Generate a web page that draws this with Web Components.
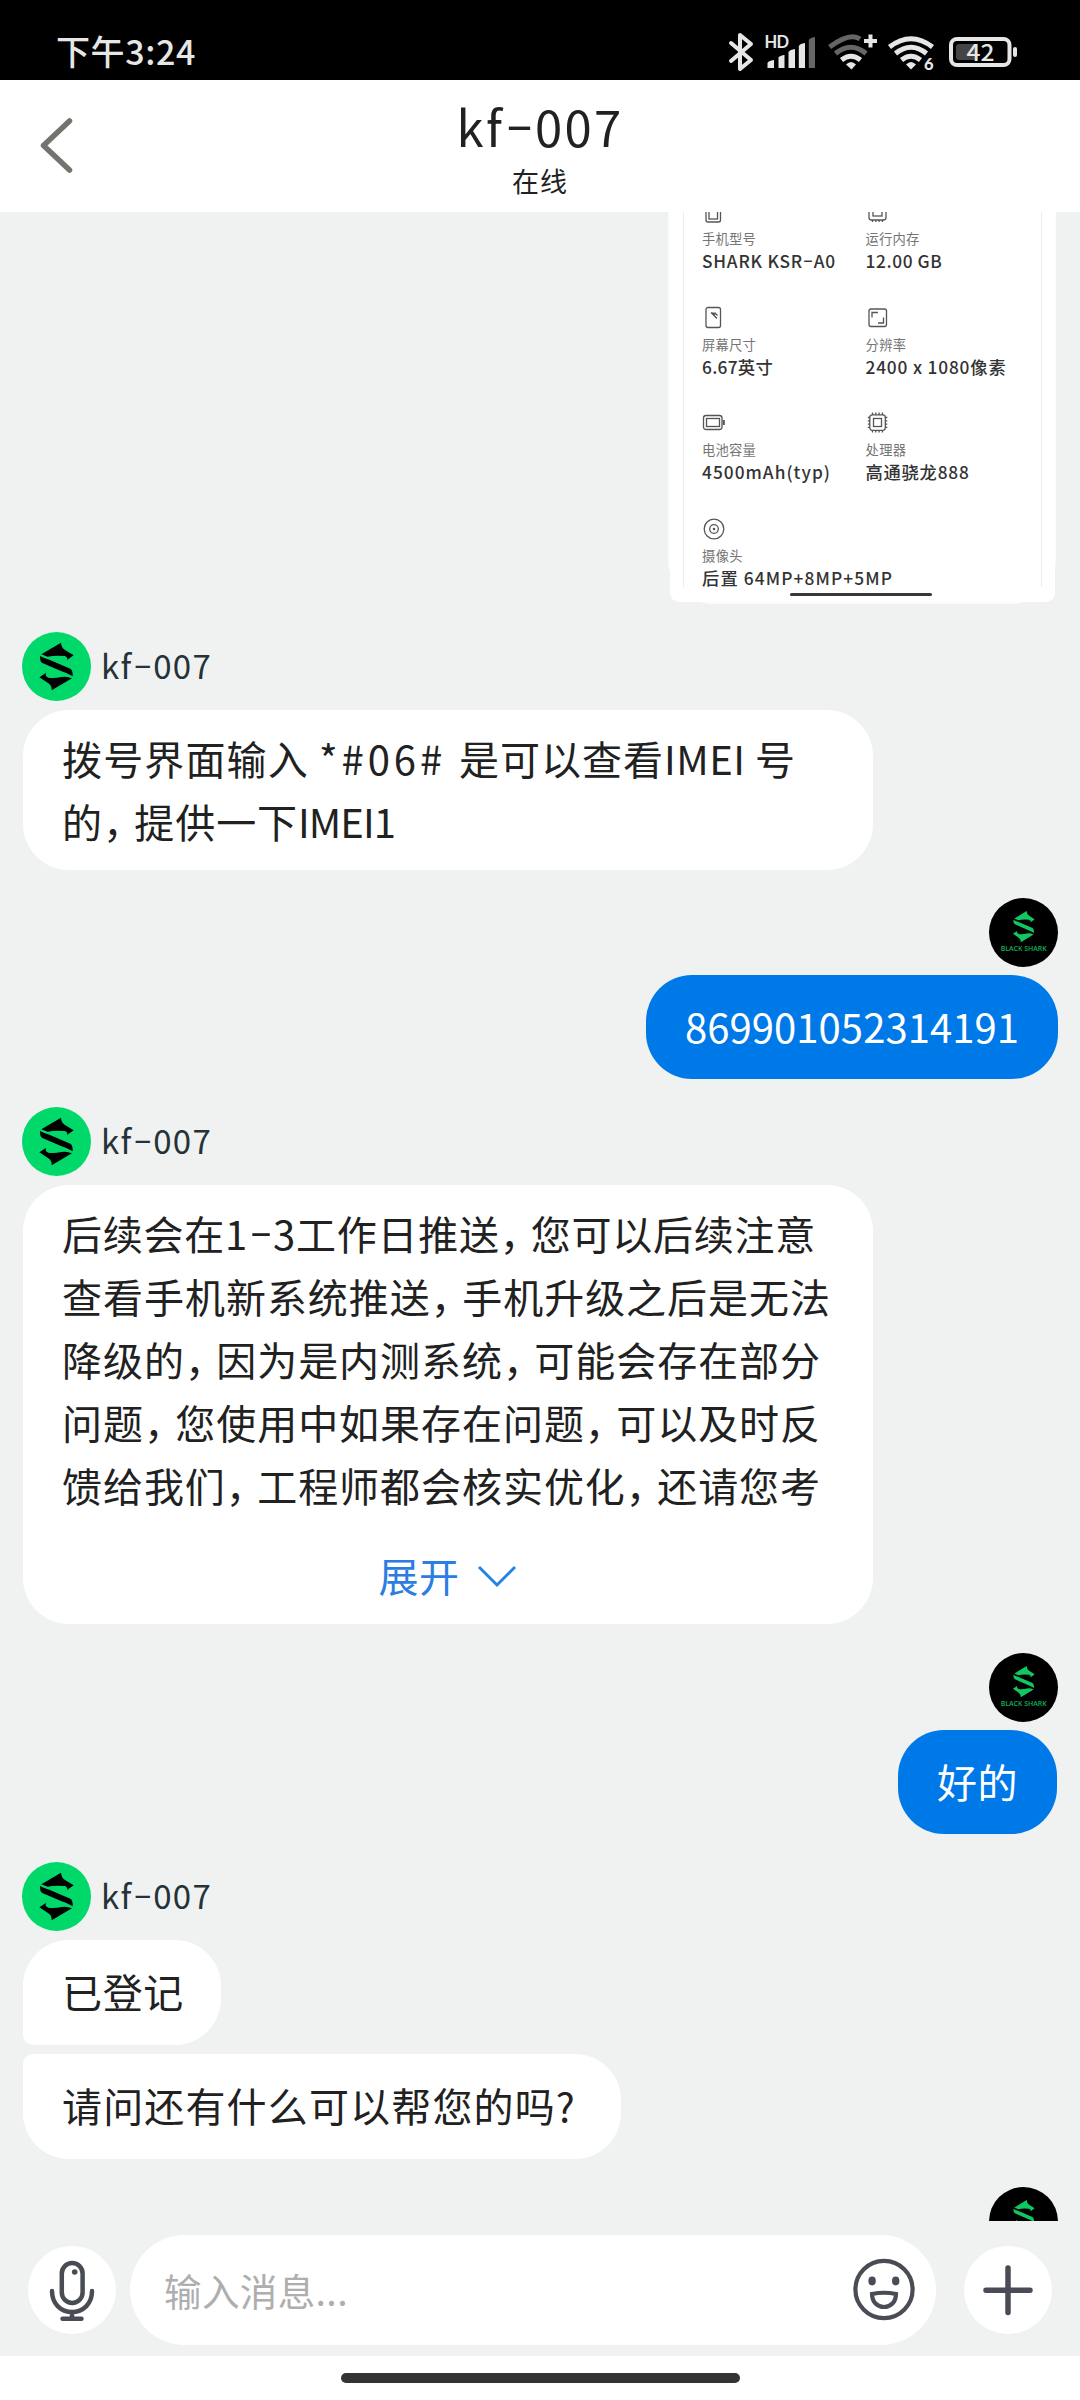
<!DOCTYPE html>
<html lang="zh-CN">
<head>
<meta charset="utf-8">
<title>kf-007</title>
<style>
html,body{margin:0;padding:0}
body{width:1080px;height:2400px;overflow:hidden;background:#fff;color:#212121;font-family:"Noto Sans CJK SC",sans-serif}
.line{display:flex}
</style>
</head>
<body>
<phone-screen>
  <status-bar></status-bar>
  <chat-header><fit-text slot="name" w="167">kf-007</fit-text><fit-text slot="state" w="56">在线</fit-text></chat-header>
  <chat-log>
    <spec-card>
      <spec-cell icon="phone"><fit-text slot="label" w="54">手机型号</fit-text><fit-text w="134">SHARK KSR-A0</fit-text></spec-cell>
      <spec-cell icon="memory"><fit-text slot="label" w="54">运行内存</fit-text><fit-text w="77">12.00 GB</fit-text></spec-cell>
      <spec-cell icon="screen"><fit-text slot="label" w="54">屏幕尺寸</fit-text><fit-text w="71">6.67英寸</fit-text></spec-cell>
      <spec-cell icon="resolution"><fit-text slot="label" w="41">分辨率</fit-text><fit-text w="141">2400 x 1080像素</fit-text></spec-cell>
      <spec-cell icon="battery"><fit-text slot="label" w="54">电池容量</fit-text><fit-text w="129">4500mAh(typ)</fit-text></spec-cell>
      <spec-cell icon="chip"><fit-text slot="label" w="41">处理器</fit-text><fit-text w="104">高通骁龙888</fit-text></spec-cell>
      <spec-cell icon="camera"><fit-text slot="label" w="41">摄像头</fit-text><fit-text w="191">后置 64MP+8MP+5MP</fit-text></spec-cell>
    </spec-card>

    <agent-name style="margin-top:19px"><fit-text w="111">kf-007</fit-text></agent-name>
    <chat-bubble style="width:850px;height:160px">
      <div class="line"><fit-text w="257">拨号界面输入 </fit-text><fit-text w="140">*#06# </fit-text><fit-text w="205">是可以查看</fit-text><fit-text w="91">IMEI </fit-text><fit-text w="41">号</fit-text></div>
      <div class="line"><fit-text w="236">的，提供一下</fit-text><fit-text w="97">IMEI1</fit-text></div>
    </chat-bubble>

    <shark-avatar mine style="margin-top:19px"></shark-avatar>
    <chat-bubble mine short style="width:412px;height:104px"><fit-text w="334">869901052314191</fit-text></chat-bubble>

    <agent-name style="margin-top:19px"><fit-text w="111">kf-007</fit-text></agent-name>
    <chat-bubble style="width:850px;height:439px">
      <fit-text w="754">后续会在1-3工作日推送，您可以后续注意</fit-text>
      <fit-text w="769">查看手机新系统推送，手机升级之后是无法</fit-text>
      <fit-text w="759">降级的，因为是内测系统，可能会存在部分</fit-text>
      <fit-text w="759">问题，您使用中如果存在问题，可以及时反</fit-text>
      <fit-text w="759">馈给我们，工程师都会核实优化，还请您考</fit-text>
      <expand-link slot="more"><fit-text w="81">展开</fit-text></expand-link>
    </chat-bubble>

    <shark-avatar mine style="margin-top:20px"></shark-avatar>
    <chat-bubble mine short style="width:159px;height:104px;margin-right:1px"><fit-text w="81">好的</fit-text></chat-bubble>

    <agent-name style="margin-top:19px"><fit-text w="111">kf-007</fit-text></agent-name>
    <chat-bubble short style="width:198px;height:105px;--bl:10px"><fit-text w="122">已登记</fit-text></chat-bubble>
    <chat-bubble short style="width:598px;height:105px;--tl:10px"><fit-text w="514">请问还有什么可以帮您的吗?</fit-text></chat-bubble>

    <shark-avatar mine plain style="margin-top:19px"></shark-avatar>
  </chat-log>
  <message-composer><fit-text w="184">输入消息...</fit-text></message-composer>
  <home-indicator></home-indicator>
</phone-screen>

<script>
class Base extends HTMLElement {
  constructor() {
    super();
    this.attachShadow({ mode: 'open' });
  }
  paint(css, html) {
    this.shadowRoot.innerHTML = '<style>:host,*{box-sizing:border-box}svg{display:block;flex:none}' + css + '</style>' + html;
  }
}

const sharkMark = `
  <path d="M183 98 Q184 113 195 120 L221 136 L201 150 Q205 143 194 138 Q165 135 143 140 L124 133 Z"/>
  <path d="M120 138 Q135 146 150 150 L211 176 Q219 181 218 199 Q200 188 183 183 L127 159 Q119 154 120 138 Z"/>
  <path d="M139 188 Q133 198 145 203 Q163 206 184 201 Q200 198 216 205 L155 241 Q156 227 145 220 L118 202 Z"/>`;

customElements.define('phone-screen', class extends Base {
  connectedCallback() {
    this.paint(':host{display:flex;flex-direction:column;width:1080px;height:2400px;overflow:hidden;background:#eff2f1}::slotted(*){flex:none}', '<slot></slot>');
  }
});

customElements.define('status-bar', class extends Base {
  connectedCallback() {
    this.paint(`:host{display:flex;justify-content:space-between;height:80px;background:#000;color:#e6e6e6;padding-left:56px}
      .time{font-size:34px;font-weight:500;line-height:44px;padding-top:29px}`,
      `<div class="time"><fit-text w="140">下午3:24</fit-text></div>
      <svg width="360" height="80" viewBox="720 0 360 80" fill="none" stroke-linecap="butt">
        <g stroke="#e6e6e6" stroke-width="4" stroke-linejoin="round" stroke-linecap="round"><path d="M731 43 L751 60 L740 69 V35 L751 44 L731 61"/></g>
        <text x="764.5" y="48" font-size="16.5" font-weight="700" textLength="24.5" fill="#e6e6e6" font-family="Lato,sans-serif">HD</text>
        <g fill="#e6e6e6"><path d="M767.5 63 Q768 61 774 60 V68 H767.5Z"/><path d="M778.5 57.500 Q780 55.500 784.500 55 V68 H778.500Z"/><path d="M788.500 52 Q790 49.500 795 49 V68 H788.500Z"/><path d="M798.800 46 Q800 43.500 805 43 V68 H798.800Z"/></g>
        <path d="M808.800 40 Q810 37.500 815 37 V68 H808.800Z" fill="#666"/>
        <g stroke-width="5"><path d="M829.600 47 Q850 32 860 39" stroke="#666"/><path d="M835.500 53.500 Q851 41 866 53.500" stroke="#666"/><path d="M841.500 60 Q851 52.500 860.500 60" stroke="#e6e6e6"/></g>
        <path d="M846 64.500 Q851 59.500 856 64.500 L851.500 69.500Z" fill="#e6e6e6"/>
        <path d="M870.500 34.500V47.500M864 41H877" stroke="#e6e6e6" stroke-width="4"/>
        <g stroke="#e6e6e6" stroke-width="5"><path d="M889.500 47 Q911 30.500 932.500 47"/><path d="M895.500 53.500 Q911 41 926.500 53.500"/><path d="M901.500 60 Q911 52.500 920.500 60"/></g>
        <path d="M906 64.500 Q911 59.500 916 64.500 L911 69.500Z" fill="#e6e6e6"/>
        <text x="924" y="70" font-size="16.500" font-weight="900" fill="#e6e6e6" font-family="Lato,sans-serif">6</text>
        <rect x="951" y="39" width="58.500" height="26" rx="6" stroke="#e6e6e6" stroke-width="4"/>
        <path d="M959 44H976V60H959Q956 60 956 57V47Q956 44 959 44Z" fill="#444"/>
        <text x="966.500" y="60.700" font-size="23" font-weight="500" textLength="28" lengthAdjust="spacingAndGlyphs" fill="#e6e6e6" font-family="Noto Sans CJK SC,sans-serif">42</text>
        <rect x="1013" y="47" width="4" height="10" rx="2" fill="#e6e6e6"/>
      </svg>`);
  }
});

customElements.define('chat-header', class extends Base {
  connectedCallback() {
    this.paint(`:host{display:grid;grid-template-columns:120px 1fr 120px;height:132px;background:#fff}
      svg{margin:35px 0 0 38px}
      .mid{display:flex;flex-direction:column;align-items:center}
      .name{font-size:49px;line-height:60px;margin-top:16px}
      .state{font-size:27px;line-height:36px;margin-top:7px}`,
      `<svg width="40" height="62" fill="none" stroke="#74746e" stroke-width="5.500" stroke-linecap="round" stroke-linejoin="round"><path d="M31.500 6 L5.500 30.500 L31.500 55"/></svg>
      <div class="mid"><div class="name"><slot name="name"></slot></div><div class="state"><slot name="state"></slot></div></div>`);
  }
});

customElements.define('chat-log', class extends Base {
  connectedCallback() {
    this.paint(`:host{display:flex;flex-direction:column;gap:9px;height:2009px;overflow:hidden;padding:0 22px 0 23px}
      ::slotted(*){flex:none}`, '<slot></slot>');
  }
});

customElements.define('spec-card', class extends Base {
  connectedCallback() {
    this.paint(`:host{display:block;align-self:flex-end;width:388px;height:392px;margin-right:2px;padding:0 1px 2px 2px;background:#fbfdfc;border-radius:0 0 45px 45px}
      .shot{display:flex;flex-direction:column;align-items:center;height:390px;background:#fff;border-radius:0 0 9px 9px;overflow:hidden}
      .grid{display:grid;grid-template-columns:163.500px 1fr;grid-auto-rows:105.600px;width:359px;height:375px;flex:none;border:solid #ececec;border-width:0 1px;padding-left:18px;align-self:flex-start;margin-left:13px}
      .grid ::slotted(*){margin-top:-12px}
      .bar{width:142px;height:3.500px;border-radius:2px;background:#383838;margin:5.500px 3px 0 0;flex:none}`,
      `<div class="shot"><div class="grid"><slot></slot></div><div class="bar"></div></div>`);
  }
});

const specIcons = {
  phone: '<rect x="4" y="2" width="14.500" height="20" rx="2"/><rect x="7" y="5" width="8.500" height="14"/>',
  memory: '<rect x="3" y="3" width="17" height="17" rx="2.500"/><rect x="7" y="7" width="9" height="9"/><path d="M6.500 20v2M9.800 20v2M13.100 20v2M16.400 20v2"/>',
  screen: '<rect x="4" y="1.500" width="14.500" height="20" rx="2"/><path d="M9 6.500l6 6M12.500 6.500l3 3M10.500 6.500l2.500 2.500"/>',
  resolution: '<rect x="3" y="3" width="17.500" height="17.500" rx="2"/><path d="M6 11.500V6.500H12M12 17H17.500V11.500"/>',
  battery: '<rect x="1.500" y="4.500" width="18.500" height="14" rx="2.500"/><rect x="4.500" y="7.500" width="13" height="8"/><path d="M21.800 9v5" stroke-width="2"/>',
  chip: '<rect x="3.800" y="3.800" width="15.500" height="15.500" rx="2.500"/><rect x="7.500" y="7.500" width="8" height="8"/><path d="M6.500 1.500v2.500M9.800 1.500v2.500M13.100 1.500v2.500M16.400 1.500v2.500M6.500 19v2.500M9.800 19v2.500M13.100 19v2.500M16.400 19v2.500M1.800 6.500h2M1.800 9.800h2M1.800 13.100h2M1.800 16.400h2M19.300 6.500h2M19.300 9.800h2M19.300 13.100h2M19.300 16.400h2"/>',
  camera: '<circle cx="12" cy="12" r="9.800"/><circle cx="12" cy="12" r="4.300"/><circle cx="12" cy="12" r=".6"/>'
};

customElements.define('spec-cell', class extends Base {
  connectedCallback() {
    this.paint(`:host{display:flex;flex-direction:column}
      .label{font-size:13.300px;line-height:20px;color:#757575;margin-top:5px}
      .value{font-size:17.300px;line-height:24px;font-weight:500;color:#333}`,
      `<svg width="24" height="24" fill="none" stroke="#555" stroke-width="1.300">${specIcons[this.getAttribute('icon')]}</svg>
      <div class="label"><slot name="label"></slot></div><div class="value"><slot></slot></div>`);
  }
});

customElements.define('shark-avatar', class extends Base {
  connectedCallback() {
    const mine = this.hasAttribute('mine');
    const caption = this.hasAttribute('plain') ? '' :
      '<text x="422" y="227" font-size="19" font-weight="600" textLength="138" lengthAdjust="spacingAndGlyphs" fill="#12b45a" font-family="Open Sans,sans-serif">BLACK SHARK</text>';
    this.paint(`:host{display:block;width:69px;height:69px;border-radius:50%;overflow:hidden;background:#00d969}
      :host([mine]){align-self:flex-end;background:#000;margin-bottom:-1px}`,
      mine ? `<svg width="69" height="69" viewBox="387 69 207 207"><g fill="#10c862" transform="translate(384.500 43.600) scale(.631 .657)">${sharkMark}</g>${caption}</svg>`
      : `<svg width="69" height="69" viewBox="66 66 207 207">${sharkMark}</svg>`);
  }
});

customElements.define('agent-name', class extends Base {
  connectedCallback() {
    this.paint(`:host{display:flex;align-items:center;gap:10px;height:69px;margin-left:-1px;color:#263238;font-size:33px;line-height:48px}
      slot{display:block;margin-top:-3px}`, '<shark-avatar></shark-avatar><slot></slot>');
  }
});

customElements.define('chat-bubble', class extends Base {
  connectedCallback() {
    this.paint(`:host{display:flex;flex-direction:column;padding:17px 39px;background:#fff;color:#212121;font-size:40px;line-height:63px;border-radius:var(--tl,46px) 46px 46px var(--bl,46px)}
      :host([mine]){align-self:flex-end;background:#0079e8;color:#fff}
      :host([short]){padding-top:20px}
      .more{display:flex;justify-content:center}`,
      '<slot></slot><div class="more"><slot name="more"></slot></div>');
  }
});

customElements.define('expand-link', class extends Base {
  connectedCallback() {
    this.paint(`:host{display:flex;align-items:center;gap:16px;margin-top:27px;color:#2a7de1;line-height:63px}
      svg{margin-top:2px}`,
      '<slot></slot><svg width="42" height="24" fill="none" stroke="#2384e4" stroke-width="3"><path d="M3 2 L21 20 L39 2"/></svg>');
  }
});

customElements.define('message-composer', class extends Base {
  connectedCallback() {
    this.paint(`:host{display:flex;align-items:center;height:135px;padding:3px 28px 0;background:#eff2f1}
      .round{display:flex;width:88px;height:88px;border-radius:50%;background:#fff;flex:none}
      .field{display:flex;align-items:center;justify-content:space-between;width:806px;height:110px;border-radius:55px;background:#fff;margin:0 28px 0 14px;padding:0 20px 0 34px;color:#aeaeae;font-size:37.500px;line-height:60px}`,
      `<div class="round"><svg width="88" height="88" viewBox="28 2246 88 88" fill="none" stroke="#4a4c55" stroke-width="4.500" stroke-linecap="round">
        <rect x="61.800" y="2263" width="20.800" height="40" rx="10.400"/><circle cx="74.700" cy="2272" r="2.800" fill="#4a4c55" stroke="none"/>
        <path d="M52 2291 C52 2304 61 2312 72 2312 C83 2312 92 2304 92 2291M72 2312V2318M62.500 2318.800H81.500"/></svg></div>
      <div class="field"><slot></slot><svg width="64" height="64" viewBox="851.500 2258 64 64" fill="none" stroke="#4a4c55" stroke-width="4.200">
        <circle cx="883.500" cy="2289.500" r="28.600"/><g fill="#4a4c55" stroke="none"><ellipse cx="871.600" cy="2281" rx="3.700" ry="4.400"/><ellipse cx="895.200" cy="2281" rx="3.700" ry="4.400"/></g>
        <path d="M871.500 2294 Q883.500 2291.500 895.500 2294 C895.500 2302 890 2307 883.500 2307 C877 2307 871.500 2302 871.500 2294Z"/></svg></div>
      <div class="round"><svg width="88" height="88" fill="none" stroke="#4a4c55" stroke-width="5.500" stroke-linecap="round"><path d="M44 22V66.500M22 44.300H66"/></svg></div>`);
  }
});

customElements.define('home-indicator', class extends Base {
  connectedCallback() {
    this.paint(':host{display:flex;justify-content:center;height:44px;background:#fff;padding-top:17px}div{width:399px;height:10px;border-radius:5px;background:#333}', '<div></div>');
  }
});

/* Spreads its glyphs so that the line has the advance width w.
   Defined last: the fonts of its containers must be in place when it measures. */
customElements.define('fit-text', class extends Base {
  connectedCallback() {
    this.paint(`:host{display:block;white-space:nowrap}
      span{display:inline-block;white-space:pre;vertical-align:top}
      ::slotted(c-comma){letter-spacing:calc(var(--ls,0px) - .24em)}
      ::slotted(c-dash){display:inline-block;letter-spacing:0;transform:translateY(-.1em) scaleX(1.7);margin:0 .14em}`,
      '<span><slot></slot></span>');
    const text = this.textContent;
    this.textContent = '';
    for (const part of text.split(/([，-])/)) {
      if (!part) continue;
      if (part === '，' || part === '-') {
        const el = document.createElement(part === '-' ? 'c-dash' : 'c-comma');
        el.textContent = part;
        this.append(el);
      } else this.append(part);
    }
    const span = this.shadowRoot.querySelector('span');
    const n = [...text].filter(c => c !== '-').length;
    const ls = (Number(this.getAttribute('w')) - span.getBoundingClientRect().width) / n;
    this.style.setProperty('--ls', ls + 'px');
    this.style.letterSpacing = ls + 'px';
  }
});
</script>
</body>
</html>
